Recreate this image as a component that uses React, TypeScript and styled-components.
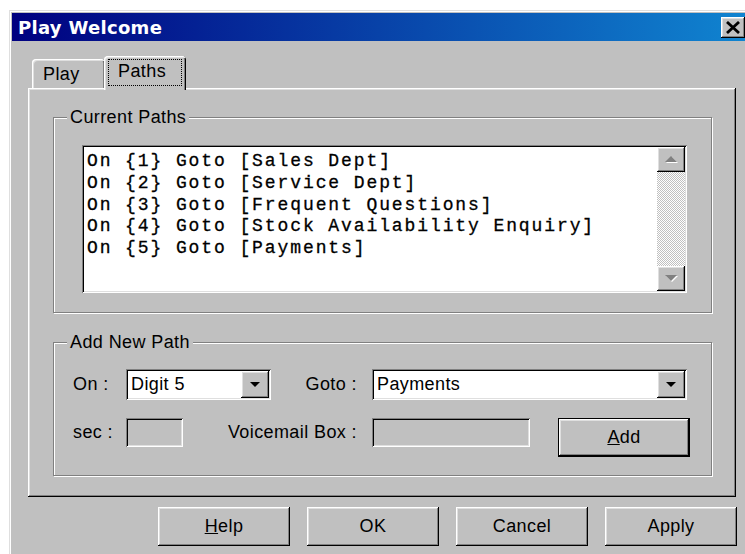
import React from "react";
import styled, { createGlobalStyle } from "styled-components";

const GlobalStyle = createGlobalStyle`
  html, body {
    margin: 0;
    padding: 0;
    background: #fff;
    overflow: hidden;
  }
  body {
    font-family: "Liberation Sans", Arial, sans-serif;
    font-size: 18px;
    letter-spacing: 0.4px;
    color: #000;
  }
`;

// classic 3d bevels
const raised = `
  box-shadow: inset -1px -1px #000, inset 1px 1px #fff,
    inset -2px -2px #808080, inset 2px 2px #dfdfdf;
`;
const sunken = `
  box-shadow: inset 1px 1px #808080, inset -1px -1px #fff,
    inset 2px 2px #000, inset -2px -2px #dfdfdf;
`;

const Window = styled.div`
  margin: 10px 0 0 9px;
  width: 740px;
  height: 560px;
  box-sizing: border-box;
  padding: 3px;
  background: #c0c0c0;
  box-shadow: inset 1px 1px #dfdfdf, inset 2px 2px #fff;
`;

const TitleBar = styled.div`
  height: 28px;
  display: flex;
  align-items: center;
  justify-content: space-between;
  padding: 0 1px 0 6px;
  background: linear-gradient(90deg, #000080, #1084d0);
`;

const Title = styled.span`
  font-family: "DejaVu Sans", sans-serif;
  font-weight: bold;
  font-size: 18px;
  letter-spacing: 0.3px;
  color: #fff;
`;

const CloseButton = styled.div`
  width: 24px;
  height: 21px;
  background: #c0c0c0;
  display: flex;
  align-items: center;
  justify-content: center;
  ${raised}
`;

const Content = styled.div`
  padding: 15px 0 0 16px;
`;

const TabStrip = styled.div`
  position: relative;
  z-index: 1;
  display: flex;
  align-items: flex-end;
  height: 34px;
  padding-left: 4px;
  margin-bottom: -2px;
`;

const Tab = styled.div<{ $active?: boolean }>`
  position: relative;
  z-index: ${(p) => (p.$active ? 1 : 0)};
  box-sizing: border-box;
  width: ${(p) => (p.$active ? 82 : 73)}px;
  height: ${(p) => (p.$active ? 34 : 29)}px;
  margin-left: ${(p) => (p.$active ? -1 : 0)}px;
  margin-bottom: ${(p) => (p.$active ? 0 : 2)}px;
  padding: ${(p) => (p.$active ? "3px 4px 4px 4px" : "5px 0 0 11px")};
  background: #c0c0c0;
  border-radius: 4px 4px 0 0;
  box-shadow: inset 1px 1px #fff, inset 2px 2px #dfdfdf, inset -1px 0 #000,
    inset -2px 0 #808080;
`;

const FocusRing = styled.div`
  height: 27px;
  box-sizing: border-box;
  border: 1px dotted #000;
  padding: 1px 0 0 9px;
`;

const Panel = styled.div`
  width: 708px;
  height: 409px;
  box-sizing: border-box;
  padding: 29px 24px 0 25px;
  display: flex;
  flex-direction: column;
  gap: 29px;
  ${raised}
`;

const Group = styled.div<{ $pad: string }>`
  position: relative;
  box-sizing: border-box;
  padding: ${(p) => p.$pad};
  border: 1px solid #808080;
  box-shadow: inset 1px 1px #fff, 1px 1px #fff;
`;

const Legend = styled.span`
  position: absolute;
  top: -11px;
  left: 13px;
  padding: 0 3px;
  line-height: 20px;
  background: #c0c0c0;
`;

const ListBox = styled.div`
  height: 148px;
  box-sizing: border-box;
  padding: 2px;
  display: flex;
  background: #fff;
  ${sunken}
`;

const Lines = styled.ul`
  flex: 1;
  margin: 0;
  padding: 4px 0 0 3px;
  list-style: none;
  font-family: "Liberation Mono", "Courier New", monospace;
  font-size: 18px;
  line-height: 21.8px;
  letter-spacing: 1.9px;
  white-space: pre;
  -webkit-text-stroke: 0.3px #000;
`;

const ScrollBar = styled.div`
  width: 28px;
  display: flex;
  flex-direction: column;
`;

const ScrollButton = styled.div`
  height: 25px;
  background: #c0c0c0;
  display: flex;
  align-items: center;
  justify-content: center;
  ${raised}
`;

const ScrollTrack = styled.div`
  flex: 1;
  background: repeating-conic-gradient(#c0c0c0 0 25%, #fff 0 50%) 0 0 / 2px
    2px;
`;

const Row = styled.div<{ $h: number; $top?: number }>`
  display: flex;
  align-items: flex-start;
  height: ${(p) => p.$h}px;
  margin-top: ${(p) => p.$top || 0}px;
  padding-left: 19px;
`;

const FieldLabel = styled.div<{ $w: number; $gap: number; $right?: boolean; $h: number }>`
  width: ${(p) => p.$w}px;
  height: ${(p) => p.$h}px;
  margin-right: ${(p) => p.$gap}px;
  display: flex;
  align-items: center;
  justify-content: ${(p) => (p.$right ? "flex-end" : "flex-start")};
  white-space: nowrap;
`;

const Combo = styled.div<{ $w: number }>`
  width: ${(p) => p.$w}px;
  height: 31px;
  box-sizing: border-box;
  padding: 2px;
  display: flex;
  align-items: center;
  background: #fff;
  ${sunken}
`;

const ComboText = styled.span`
  flex: 1;
  padding-left: 3px;
`;

const DropButton = styled.div`
  width: 28px;
  height: 27px;
  background: #c0c0c0;
  display: flex;
  align-items: center;
  justify-content: center;
  ${raised}
`;

const TextField = styled.div<{ $w: number; $gap?: number }>`
  width: ${(p) => p.$w}px;
  height: 29px;
  margin-right: ${(p) => p.$gap || 0}px;
  background: #c0c0c0;
  ${sunken}
`;

const Button = styled.div<{ $default?: boolean }>`
  width: 132px;
  height: 39px;
  box-sizing: border-box;
  display: flex;
  align-items: center;
  justify-content: center;
  background: #c0c0c0;
  ${(p) =>
    p.$default
      ? `box-shadow: inset 0 0 0 1px #000, inset -2px -2px #000, inset 2px 2px #fff,
          inset -3px -3px #808080, inset 3px 3px #dfdfdf;`
      : raised}
`;

const ButtonRow = styled.div`
  width: 709px;
  margin-top: 10px;
  display: flex;
  justify-content: flex-end;
  gap: 17px;
`;

const paths = [
  "On {1} Goto [Sales Dept]",
  "On {2} Goto [Service Dept]",
  "On {3} Goto [Frequent Questions]",
  "On {4} Goto [Stock Availability Enquiry]",
  "On {5} Goto [Payments]",
];

const DownArrow = () => (
  <svg width="10" height="6" viewBox="0 0 10 6">
    <polygon points="0,0 10,0 5,5" fill="#000" />
  </svg>
);

const GreyArrow = ({ up }: { up?: boolean }) => (
  <svg width="14" height="9" viewBox="0 0 14 9">
    <polygon points={up ? "2,8 14,8 8,2" : "2,2 14,2 8,8"} fill="#fff" />
    <polygon points={up ? "1,7 13,7 7,1" : "1,1 13,1 7,7"} fill="#808080" />
  </svg>
);

const CloseIcon = () => (
  <svg width="16" height="13" viewBox="0 0 16 13">
    <path d="M2 1 L14 12 M14 1 L2 12" stroke="#000" strokeWidth="2.8" />
  </svg>
);

const App = () => {
  return (
    <>
      <GlobalStyle />
      <Window>
        <TitleBar>
          <Title>Play Welcome</Title>
          <CloseButton>
            <CloseIcon />
          </CloseButton>
        </TitleBar>
        <Content>
          <TabStrip>
            <Tab>Play</Tab>
            <Tab $active>
              <FocusRing>Paths</FocusRing>
            </Tab>
          </TabStrip>
          <Panel>
            <Group $pad="27px 24px 19px 28px">
              <Legend>Current Paths</Legend>
              <ListBox>
                <Lines>
                  {paths.map((p) => (
                    <li key={p}>{p}</li>
                  ))}
                </Lines>
                <ScrollBar>
                  <ScrollButton>
                    <GreyArrow up />
                  </ScrollButton>
                  <ScrollTrack />
                  <ScrollButton>
                    <GreyArrow />
                  </ScrollButton>
                </ScrollBar>
              </ListBox>
            </Group>
            <Group $pad="26px 0 18px 0">
              <Legend>Add New Path</Legend>
              <Row $h={31}>
                <FieldLabel $w={39} $gap={14} $h={31}>
                  On :
                </FieldLabel>
                <Combo $w={145}>
                  <ComboText>Digit 5</ComboText>
                  <DropButton>
                    <DownArrow />
                  </DropButton>
                </Combo>
                <FieldLabel $w={86} $gap={15} $h={31} $right>
                  Goto :
                </FieldLabel>
                <Combo $w={315}>
                  <ComboText>Payments</ComboText>
                  <DropButton>
                    <DownArrow />
                  </DropButton>
                </Combo>
              </Row>
              <Row $h={39} $top={18}>
                <FieldLabel $w={39} $gap={14} $h={29}>
                  sec :
                </FieldLabel>
                <TextField $w={57} />
                <FieldLabel $w={174} $gap={15} $h={29} $right>
                  Voicemail Box :
                </FieldLabel>
                <TextField $w={158} $gap={28} />
                <Button $default>
                  <span>
                    <u>A</u>dd
                  </span>
                </Button>
              </Row>
            </Group>
          </Panel>
          <ButtonRow>
            <Button>
              <span>
                <u>H</u>elp
              </span>
            </Button>
            <Button>OK</Button>
            <Button>Cancel</Button>
            <Button>Apply</Button>
          </ButtonRow>
        </Content>
      </Window>
    </>
  );
};

export default App;
